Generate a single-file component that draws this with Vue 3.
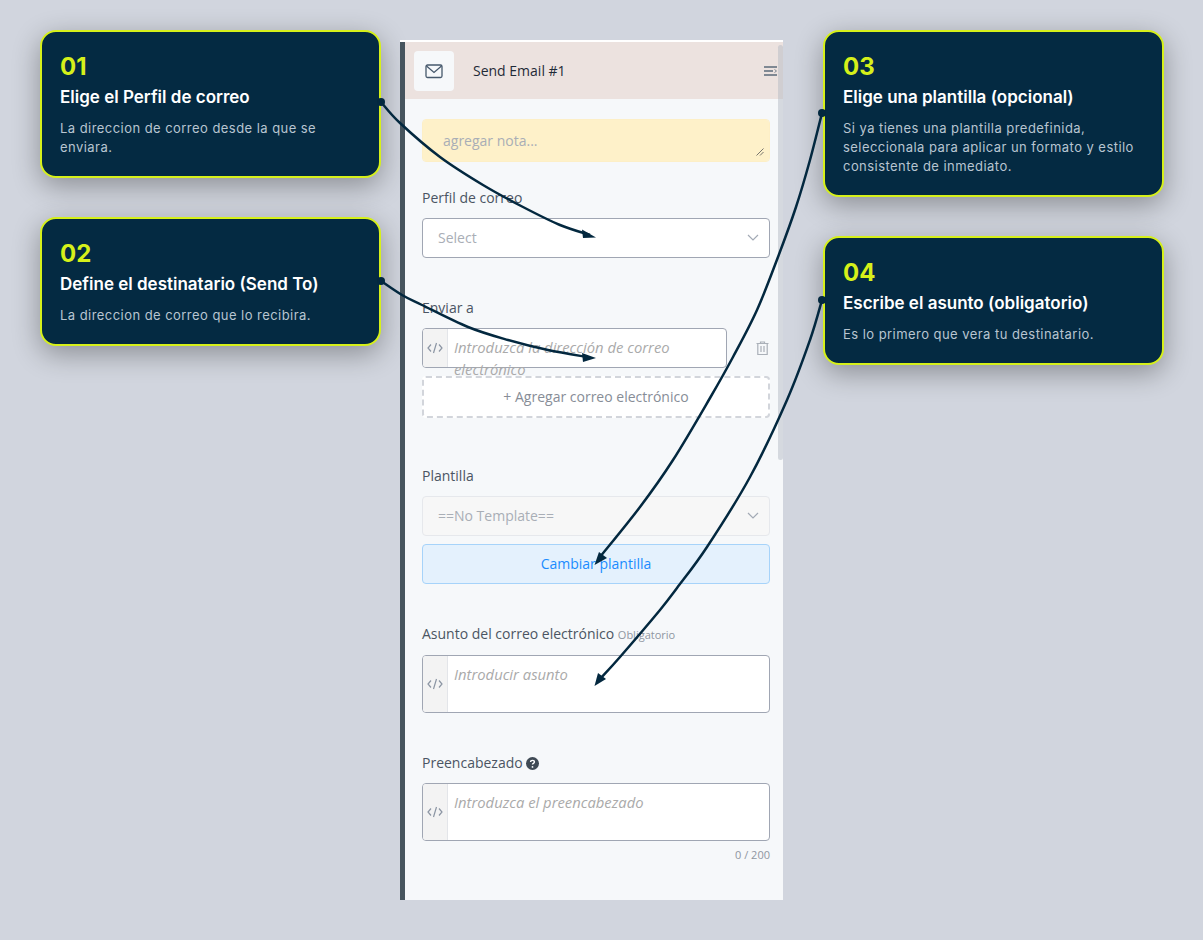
<script setup>
const leftNotes = [
  { num: '01', title: 'Elige el Perfil de correo', text: 'La direccion de correo desde la que se enviara.' },
  { num: '02', title: 'Define el destinatario (Send To)', text: 'La direccion de correo que lo recibira.' }
]
const rightNotes = [
  { num: '03', title: 'Elige una plantilla (opcional)', text: 'Si ya tienes una plantilla predefinida, seleccionala para aplicar un formato y estilo consistente de inmediato.' },
  { num: '04', title: 'Escribe el asunto (obligatorio)', text: 'Es lo primero que vera tu destinatario.' }
]

// catmull-rom through the points the arrows pass by
const smooth = (pts) => {
  let d = `M${pts[0][0]} ${pts[0][1]}`
  for (let i = 0; i < pts.length - 1; i++) {
    const p0 = pts[i - 1] || pts[i]
    const p1 = pts[i]
    const p2 = pts[i + 1]
    const p3 = pts[i + 2] || p2
    const c1 = [p1[0] + (p2[0] - p0[0]) / 6, p1[1] + (p2[1] - p0[1]) / 6]
    const c2 = [p2[0] - (p3[0] - p1[0]) / 6, p2[1] - (p3[1] - p1[1]) / 6]
    d += ` C${c1[0]} ${c1[1]} ${c2[0]} ${c2[1]} ${p2[0]} ${p2[1]}`
  }
  return d
}

const arrows = [
  {
    pts: [[381, 102], [400, 123], [440, 157], [483, 185], [523, 207], [560, 225], [590, 235]],
    head: '596,237.500 582,229.500 583,238'
  },
  {
    pts: [[381, 281], [402, 295], [422, 305], [468, 327], [508, 340], [548, 350], [590, 357.500]],
    head: '596,358 582,353 583,362'
  },
  {
    pts: [[822, 113], [810, 160], [796, 207], [778, 257], [757, 310], [733, 357], [710, 398], [673, 460], [640, 507], [600, 557]],
    head: '594.500,565 599,552 607,558'
  },
  {
    pts: [[822, 300], [810, 340], [787, 400], [750, 477], [707, 547], [677, 588], [660, 610], [620, 657], [600, 679]],
    head: '594.500,686 598,673 606,679'
  }
].map((a) => ({ ...a, d: smooth(a.pts), dot: a.pts[0] }))
</script>

<template>
  <div class="page">
    <div class="notes left">
      <div v-for="n in leftNotes" :key="n.num" class="note-card">
        <div class="note-num">{{ n.num }}</div>
        <div class="note-title">{{ n.title }}</div>
        <div class="note-text">{{ n.text }}</div>
      </div>
    </div>

    <div class="panel">
      <div class="panel-inner">
        <div class="panel-head">
          <div class="head-icon">
            <svg width="20" height="20" viewBox="0 0 20 20" fill="none" stroke="#46586c" stroke-width="1.300">
              <rect x="2" y="4" width="16" height="12.500" rx="1.500" />
              <path d="M2.500 5 10 11.500 17.500 5" />
            </svg>
          </div>
          <div class="head-title">Send Email #1</div>
          <svg class="head-menu" width="13" height="12" viewBox="0 0 13 12" fill="none" stroke="#7f8893" stroke-width="1.800">
            <path d="M0 2h13M0 6h9M0 10h13" />
            <path d="M10.500 4.500 12.500 6l-2 1.500" stroke-width="1" />
          </svg>
        </div>

        <div class="form">
          <div class="note-wrap">
            <textarea class="note-input" placeholder="agregar nota..."></textarea>
            <svg class="grip" width="8" height="8" viewBox="0 0 8 8" fill="none" stroke="#555" stroke-width="0.800">
              <path d="M0.500 7.500 7.500 0.500M4 7.500 7.500 4" />
            </svg>
          </div>

          <label class="label first">Perfil de correo</label>
          <div class="select">
            <span>Select</span>
            <svg width="12" height="7" viewBox="0 0 12 7" fill="none" stroke="#a3aab5" stroke-width="1.200"><path d="M1 1l5 5 5-5" /></svg>
          </div>

          <label class="label">Enviar a</label>
          <div class="mail-row">
            <div class="code-field short">
              <div class="addon">
                <svg width="16" height="12" viewBox="0 0 16 12" fill="none" stroke="#8b95a3" stroke-width="1.200"><path d="M4 2.500 1 6l3 3.500M12 2.500 15 6l-3 3.500M9.500 1 6.500 11" /></svg>
              </div>
              <div class="placeholder">Introduzca la dirección de correo electrónico</div>
            </div>
            <svg class="trash" width="13" height="14" viewBox="0 0 13 14" fill="none" stroke="#aab0b8" stroke-width="1.200">
              <path d="M0.500 2.500h12M4.500 2.500V1h4v1.500M1.800 2.500v11h9.400v-11M5 5v6M8 5v6" />
            </svg>
          </div>
          <div class="add-btn">+ Agregar correo electrónico</div>

          <label class="label plantilla">Plantilla</label>
          <div class="select disabled">
            <span>==No Template==</span>
            <svg width="12" height="7" viewBox="0 0 12 7" fill="none" stroke="#a3aab5" stroke-width="1.200"><path d="M1 1l5 5 5-5" /></svg>
          </div>
          <div class="change-btn">Cambiar plantilla</div>

          <label class="label asunto">Asunto del correo electrónico <small>Obligatorio</small></label>
          <div class="code-field tall">
            <div class="addon">
              <svg width="16" height="12" viewBox="0 0 16 12" fill="none" stroke="#8b95a3" stroke-width="1.200"><path d="M4 2.500 1 6l3 3.500M12 2.500 15 6l-3 3.500M9.500 1 6.500 11" /></svg>
            </div>
            <div class="placeholder">Introducir asunto</div>
          </div>

          <label class="label asunto">Preencabezado
            <svg class="help" width="13" height="13" viewBox="0 0 13 13">
              <circle cx="6.500" cy="6.500" r="6.500" fill="#3f4a55" />
              <path d="M4.600 5.100c0-1.100.9-1.700 1.900-1.700s1.900.6 1.900 1.600c0 1.400-1.900 1.300-1.900 2.600" fill="none" stroke="#fff" stroke-width="1.400" />
              <circle cx="6.500" cy="9.900" r=".9" fill="#fff" />
            </svg>
          </label>
          <div class="code-field tall">
            <div class="addon">
              <svg width="16" height="12" viewBox="0 0 16 12" fill="none" stroke="#8b95a3" stroke-width="1.200"><path d="M4 2.500 1 6l3 3.500M12 2.500 15 6l-3 3.500M9.500 1 6.500 11" /></svg>
            </div>
            <div class="placeholder">Introduzca el preencabezado</div>
          </div>
          <div class="counter">0 / 200</div>
        </div>
      </div>

      <div class="scrollbar"></div>
    </div>

    <div class="notes right">
      <div v-for="n in rightNotes" :key="n.num" class="note-card">
        <div class="note-num">{{ n.num }}</div>
        <div class="note-title">{{ n.title }}</div>
        <div class="note-text">{{ n.text }}</div>
      </div>
    </div>

    <svg class="arrows" width="1203" height="940" viewBox="0 0 1203 940" fill="none">
      <g v-for="(a, i) in arrows" :key="i">
        <path :d="a.d" stroke="#03283f" stroke-width="2.500" />
        <circle :cx="a.dot[0]" :cy="a.dot[1]" r="4" fill="#03283f" />
        <polygon :points="a.head" fill="#03283f" />
      </g>
    </svg>
  </div>
</template>

<style>
body {
  background: #d1d5de;
}
</style>

<style scoped>
.page {
  position: relative;
  width: 1203px;
  height: 940px;
  overflow: hidden;
  background: #d1d5de;
  display: flex;
  align-items: flex-start;
  font-family: "Open Sans", sans-serif;
}

.notes {
  width: 341px;
  display: flex;
  flex-direction: column;
  gap: 39px;
  margin-top: 30px;
}
.notes.left {
  margin-left: 40px;
  margin-right: 19px;
}
.notes.right {
  margin-left: 40px;
}

.note-card {
  box-sizing: border-box;
  padding: 20px 18px 19px;
  background: #042a42;
  border: 2px solid #d6f01a;
  border-radius: 16px;
  box-shadow: 0 8px 28px rgba(0, 0, 0, 0.33);
  font-family: Inter, sans-serif;
}
.note-num {
  font-size: 24px;
  font-weight: 700;
  line-height: 29px;
  color: #d6f01a;
}
.note-title {
  margin-top: 6px;
  font-size: 17px;
  font-weight: 600;
  line-height: 20px;
  color: #fff;
}
.note-text {
  margin-top: 12px;
  font-size: 13px;
  line-height: 19px;
  letter-spacing: 0.45px;
  color: #b8c5d1;
}

.panel {
  position: relative;
  box-sizing: border-box;
  width: 383px;
  height: 860px;
  margin-top: 40px;
  background: #f6f8fa;
  border-top: 2px solid #fff;
}
.panel-inner {
  height: 100%;
  border-left: 5px solid #47555e;
}
.panel-head {
  height: 57px;
  display: flex;
  align-items: center;
  padding: 0 6px 0 9px;
  background: #ece2df;
}
.head-icon {
  width: 40px;
  height: 40px;
  display: flex;
  align-items: center;
  justify-content: center;
  background: #f6f8fa;
  border-radius: 4px;
}
.head-title {
  margin-left: 19px;
  flex: 1;
  font-size: 14px;
  color: #1f2a37;
}

.form {
  padding: 20px 13px 0 17px;
  display: flex;
  flex-direction: column;
}
.note-wrap {
  position: relative;
}
.note-input {
  box-sizing: border-box;
  display: block;
  width: 100%;
  height: 43px;
  padding: 10px 20px;
  background: #fef1c9;
  border: 1px solid #fdefc6;
  border-radius: 4px;
  outline: none;
  resize: none;
  font-family: "Open Sans", sans-serif;
  font-size: 14px;
  line-height: 22px;
}
.note-input::placeholder {
  color: #a9aeb6;
}
.grip {
  position: absolute;
  right: 6px;
  bottom: 6px;
}

.label {
  display: block;
  margin-top: 40px;
  margin-bottom: 10px;
  font-size: 14px;
  line-height: 20px;
  color: #4b5563;
}
.label.first {
  margin-top: 26px;
}
.label.plantilla {
  margin-top: 48px;
}
.label small {
  font-size: 11px;
  color: #8f96a1;
}
.help {
  vertical-align: -2px;
}

.select {
  box-sizing: border-box;
  height: 40px;
  display: flex;
  align-items: center;
  justify-content: space-between;
  padding: 0 10px 1px 15px;
  background: #fff;
  border: 1px solid #a0a6b3;
  border-radius: 4px;
  font-size: 14px;
  color: #a9aeb6;
}
.select.disabled {
  background: #f7f7f7;
  border-color: #e6e8ec;
}

.mail-row {
  display: flex;
  align-items: center;
}
.trash {
  margin-left: 29px;
}

.code-field {
  box-sizing: border-box;
  display: flex;
  background: #fff;
  border: 1px solid #a0a6b3;
  border-radius: 4px;
  width: 100%;
}
.code-field.short {
  width: 305px;
  height: 40px;
}
.code-field.tall {
  height: 58px;
}
.addon {
  flex: none;
  width: 24px;
  display: flex;
  align-items: center;
  justify-content: center;
  background: #f3f3f3;
  border-right: 1px solid #e3e5e9;
  border-radius: 3px 0 0 3px;
}
.placeholder {
  padding: 7px 6px;
  font-size: 14.800px;
  line-height: 22px;
  font-style: italic;
  color: #aaaaaa;
}

.add-btn {
  box-sizing: border-box;
  height: 42px;
  margin-top: 8px;
  padding-bottom: 1px;
  display: flex;
  align-items: center;
  justify-content: center;
  background: #fff;
  border: 2px dashed #d2d5db;
  border-radius: 4px;
  font-size: 14px;
  color: #878d97;
}
.change-btn {
  box-sizing: border-box;
  height: 40px;
  margin-top: 8px;
  padding-bottom: 1px;
  display: flex;
  align-items: center;
  justify-content: center;
  background: #e4f1fd;
  border: 1px solid #a6d3fa;
  border-radius: 4px;
  font-size: 14px;
  color: #1a8cff;
}
.counter {
  margin-top: 6px;
  text-align: right;
  font-size: 11px;
  line-height: 16px;
  color: #8f96a1;
}

.scrollbar {
  position: absolute;
  top: 3px;
  right: 0;
  width: 5px;
  height: 415px;
  background: rgba(180, 185, 195, 0.5);
  border-radius: 3px;
}

.arrows {
  position: absolute;
  top: 0;
  left: 0;
  pointer-events: none;
}
</style>
